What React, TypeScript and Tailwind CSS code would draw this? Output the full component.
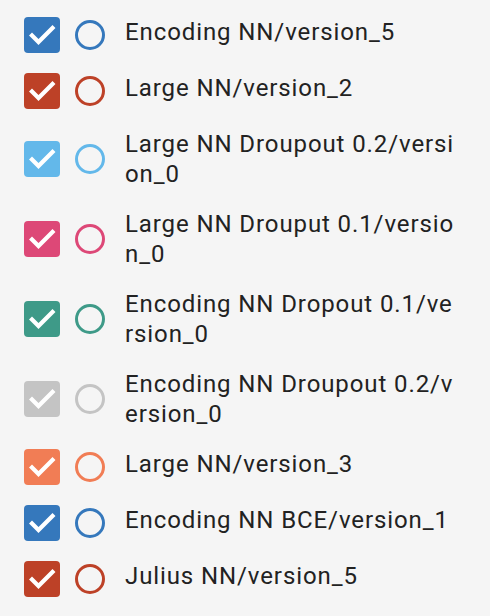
const runs = [
  { name: "Encoding NN/version_5", color: "#3578bc" },
  { name: "Large NN/version_2", color: "#bd4127" },
  { name: "Large NN Droupout 0.2/version_0", color: "#63b8ea" },
  { name: "Large NN Drouput 0.1/version_0", color: "#dd4877" },
  { name: "Encoding NN Dropout 0.1/version_0", color: "#3e9a88" },
  { name: "Encoding NN Droupout 0.2/version_0", color: "#c4c4c4" },
  { name: "Large NN/version_3", color: "#f17d55" },
  { name: "Encoding NN BCE/version_1", color: "#3578bc" },
  { name: "Julius NN/version_5", color: "#bd4127" },
];

function CheckBox({ color }: { color: string }) {
  return (
    <div
      className="w-[36px] h-[36px] rounded-[4px] flex items-center justify-center shrink-0"
      style={{ backgroundColor: color }}
    >
      <svg width="36" height="36" viewBox="0 0 36 36">
        <path
          d="M8 18.5 L14.5 25 L28.5 11"
          fill="none"
          stroke="#fff"
          strokeWidth="4.2"
          strokeLinecap="square"
        />
      </svg>
    </div>
  );
}

function Ring({ color }: { color: string }) {
  return (
    <div
      className="w-[30px] h-[30px] rounded-full border-[3px] shrink-0"
      style={{ borderColor: color }}
    />
  );
}

export default function App() {
  return (
    <div
      className="w-[490px] h-[616px] bg-[#f5f5f5] pt-[7px] pl-[24px]"
      style={{ fontFamily: "Roboto, sans-serif" }}
    >
      {runs.map((run) => (
        <div key={run.name} className="flex items-center py-[10px]">
          <CheckBox color={run.color} />
          <div className="ml-[15px] mr-[20px]">
            <Ring color={run.color} />
          </div>
          {/* text hugs the top of the 36px row, wraps mid-word like the app */}
          <span className="w-[333px] min-h-[36px] text-[24px] leading-[30px] tracking-[0.9px] text-[#222222] break-all">
            {run.name}
          </span>
        </div>
      ))}
    </div>
  );
}
